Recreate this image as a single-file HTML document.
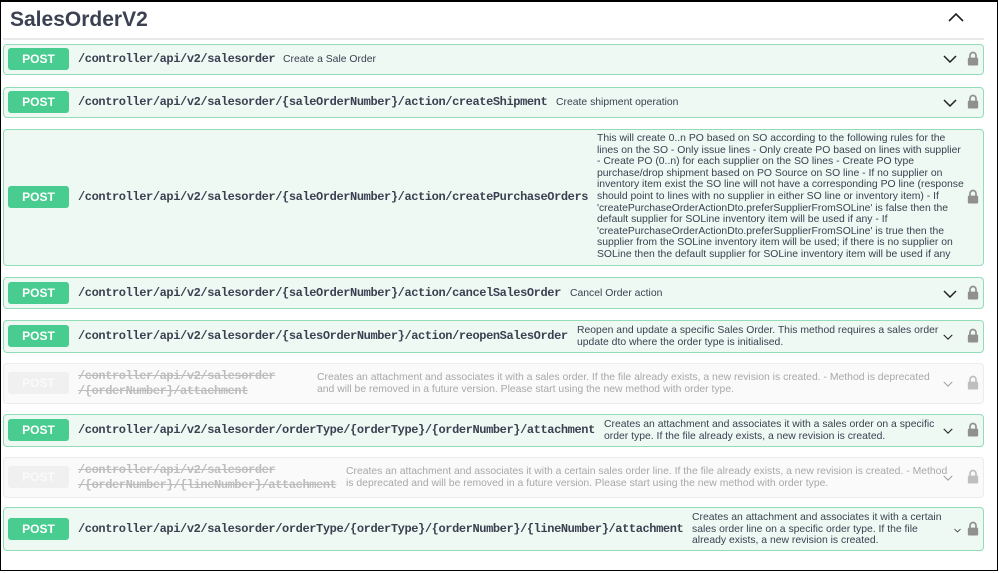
<!DOCTYPE html>
<html><head><meta charset="utf-8"><style>
*{box-sizing:border-box;margin:0;padding:0}
body{width:999px;height:573px;background:#fff;font-family:"Liberation Sans",Arial,sans-serif;position:relative;overflow:hidden}
.frame{position:absolute;left:0;top:0;width:998px;height:571px;border:1px solid #000;border-top:2px solid #000}
h1{position:absolute;left:10px;top:8px;font-size:21px;font-weight:bold;color:#3b4151}
.hr{position:absolute;left:3px;top:38px;width:981px;height:2px;background:#e8e8ea}
.up{position:absolute;left:948px;top:12px}
.row{position:absolute;left:3px;width:981px;border:1px solid #92dcb8;background:#eef9f3;border-radius:4px}
.row.dep{border-color:#ececec;background:#fafafa}
.btn{position:absolute;left:4px;width:61px;height:22px;background:#49cc90;border-radius:3px;color:#fff;font-weight:bold;font-size:12px;text-align:center;line-height:22px}
.dep .btn{background:#f0f0f0;color:#fafafa}
.path{position:absolute;left:74px;font-family:"Liberation Mono","DejaVu Sans Mono",monospace;font-weight:bold;font-size:12px;letter-spacing:-0.4px;color:#3b4151;white-space:nowrap}
.dep .path{color:#bdbdbd;text-decoration:line-through;line-height:15px;white-space:normal;width:205px}
.desc{position:absolute;font-size:10.4px;color:#3b4151;line-height:11.6px}
.dep .desc{color:#a8a8a8}
.chev{position:absolute;left:939px}
.lock{position:absolute;left:963px}
</style></head><body>
<div class="frame"></div>
<h1>SalesOrderV2</h1>
<svg class="up" width="16" height="10" viewBox="0 0 16 10"><path d="M1 9 L8 2 L15 9" fill="none" stroke="#222" stroke-width="1.6"/></svg>
<div class="hr"></div>

<svg width="0" height="0" style="position:absolute"><defs>
<symbol id="lk" viewBox="0 0 12 16"><path d="M2.8 8 V4.8 A3.2 3.2 0 0 1 9.2 4.8 V8" fill="none" stroke="#909090" stroke-width="1.8"/><rect x="0.5" y="7" width="11" height="8.5" rx="1.2" fill="#909090"/></symbol>
<symbol id="cv" viewBox="0 0 14 8"><path d="M1 1 L7 7 L13 1" fill="none" stroke="#222" stroke-width="1.5"/></symbol>
</defs></svg>

<div class="row" style="top:44px;height:31px">
<div class="btn" style="top:3px">POST</div>
<div class="path" style="top:7px">/controller/api/v2/salesorder</div>
<div class="desc" style="left:279px;top:9px">Create a Sale Order</div>
<svg class="chev" style="top:10px" width="14" height="8"><use href="#cv"/></svg>
<svg class="lock" style="top:6px" width="12" height="15"><use href="#lk"/></svg>
</div>

<div class="row" style="top:87px;height:31px">
<div class="btn" style="top:3px">POST</div>
<div class="path" style="top:7px">/controller/api/v2/salesorder/{saleOrderNumber}/action/createShipment</div>
<div class="desc" style="left:552px;top:9px">Create shipment operation</div>
<svg class="chev" style="top:11px" width="14" height="8"><use href="#cv"/></svg>
<svg class="lock" style="top:6px" width="12" height="15"><use href="#lk"/></svg>
</div>

<div class="row" style="top:129px;height:137px">
<div class="btn" style="top:56px">POST</div>
<div class="path" style="top:60px">/controller/api/v2/salesorder/{saleOrderNumber}/action/createPurchaseOrders</div>
<div class="desc" style="left:593px;top:3px;width:368px">This will create 0..n PO based on SO according to the following rules for the lines on the SO - Only issue lines - Only create PO based on lines with supplier - Create PO (0..n) for each supplier on the SO lines - Create PO type purchase/drop shipment based on PO Source on SO line - If no supplier on inventory item exist the SO line will not have a corresponding PO line (response should point to lines with no supplier in either SO line or inventory item) - If 'createPurchaseOrderActionDto.preferSupplierFromSOLine' is false then the default supplier for SOLine inventory item will be used if any - If 'createPurchaseOrderActionDto.preferSupplierFromSOLine' is true then the supplier from the SOLine inventory item will be used; if there is no supplier on SOLine then the default supplier for SOLine inventory item will be used if any</div>
<svg class="lock" style="top:59px" width="12" height="15"><use href="#lk"/></svg>
</div>

<div class="row" style="top:277px;height:32px">
<div class="btn" style="top:4px">POST</div>
<div class="path" style="top:8px">/controller/api/v2/salesorder/{saleOrderNumber}/action/cancelSalesOrder</div>
<div class="desc" style="left:566px;top:10px">Cancel Order action</div>
<svg class="chev" style="top:12px" width="14" height="8"><use href="#cv"/></svg>
<svg class="lock" style="top:7px" width="12" height="15"><use href="#lk"/></svg>
</div>

<div class="row" style="top:320px;height:33px">
<div class="btn" style="top:4px">POST</div>
<div class="path" style="top:8px">/controller/api/v2/salesorder/{salesOrderNumber}/action/reopenSalesOrder</div>
<div class="desc" style="left:573px;top:4px;width:362px">Reopen and update a specific Sales Order. This method requires a sales order update dto where the order type is initialised.</div>
<svg class="chev" style="top:13px" width="10" height="6"><use href="#cv"/></svg>
<svg class="lock" style="top:7px" width="12" height="15"><use href="#lk"/></svg>
</div>

<div class="row dep" style="top:363px;height:41px">
<div class="btn" style="top:8px">POST</div>
<div class="path" style="top:5px">/controller/api/v2/salesorder /{orderNumber}/attachment</div>
<div class="desc" style="left:313px;top:8px;width:625px">Creates an attachment and associates it with a sales order. If the file already exists, a new revision is created. - Method is deprecated and will be removed in a future version. Please start using the new method with order type.</div>
<svg class="chev" style="top:17px" width="10" height="6"><use href="#cv" style="opacity:.4"/></svg>
<svg class="lock" style="top:11px;opacity:.55" width="12" height="15"><use href="#lk"/></svg>
</div>

<div class="row" style="top:414px;height:33px">
<div class="btn" style="top:4px">POST</div>
<div class="path" style="top:8px">/controller/api/v2/salesorder/orderType/{orderType}/{orderNumber}/attachment</div>
<div class="desc" style="left:600px;top:4px;width:340px">Creates an attachment and associates it with a sales order on a specific order type. If the file already exists, a new revision is created.</div>
<svg class="chev" style="top:13px" width="10" height="6"><use href="#cv"/></svg>
<svg class="lock" style="top:7px" width="12" height="15"><use href="#lk"/></svg>
</div>

<div class="row dep" style="top:457px;height:41px">
<div class="btn" style="top:8px">POST</div>
<div class="path" style="top:5px;width:270px">/controller/api/v2/salesorder /{orderNumber}/{lineNumber}/attachment</div>
<div class="desc" style="left:342px;top:8px;width:602px">Creates an attachment and associates it with a certain sales order line. If the file already exists, a new revision is created. - Method is deprecated and will be removed in a future version. Please start using the new method with order type.</div>
<svg class="chev" style="top:17px" width="10" height="6"><use href="#cv" style="opacity:.4"/></svg>
<svg class="lock" style="top:11px;opacity:.55" width="12" height="15"><use href="#lk"/></svg>
</div>

<div class="row" style="top:507px;height:44px">
<div class="btn" style="top:10px">POST</div>
<div class="path" style="top:14px">/controller/api/v2/salesorder/orderType/{orderType}/{orderNumber}/{lineNumber}/attachment</div>
<div class="desc" style="left:688px;top:4px;width:262px">Creates an attachment and associates it with a certain sales order line on a specific order type. If the file already exists, a new revision is created.</div>
<svg class="chev" style="left:950px;top:20px" width="7" height="5"><use href="#cv"/></svg>
<svg class="lock" style="top:13px" width="12" height="15"><use href="#lk"/></svg>
</div>
</body></html>
